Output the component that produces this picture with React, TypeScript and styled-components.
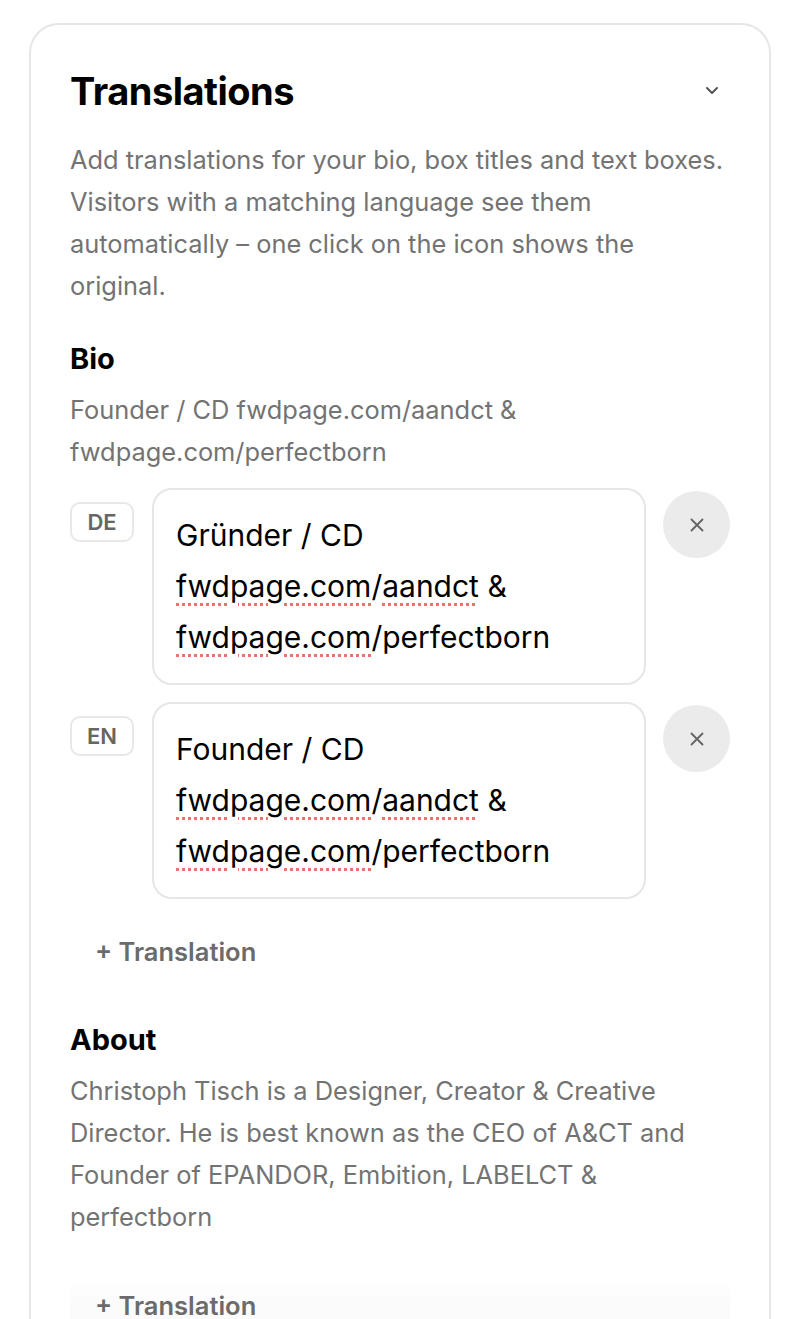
import React from "react";
import styled, { createGlobalStyle } from "styled-components";

const Global = createGlobalStyle`
  html, body { margin: 0; padding: 0; background: #ffffff; }
  body { font-family: Inter, "Noto Sans", "Liberation Sans", sans-serif; -webkit-font-smoothing: antialiased; }
  * { box-sizing: border-box; }
`;

const Page = styled.div`
  padding: 23px 29px 0;
  height: 1319px;
  overflow: hidden;
`;

const Card = styled.section`
  border: 2px solid #e6e6e6;
  border-radius: 30px;
  padding: 44px 39px 120px;
  background: #fff;
`;

const Header = styled.div`
  display: flex;
  align-items: center;
  justify-content: space-between;
`;

const Title = styled.h1`
  margin: 0;
  font-size: 38px;
  line-height: 44px;
  font-weight: 700;
  color: #000;
  letter-spacing: -0.5px;
`;

const Chevron = styled.svg`
  width: 18px;
  height: 18px;
  margin-right: 9px;
  margin-bottom: 2px;
  color: #555;
`;

const Muted = styled.p<{ $mt?: number }>`
  margin: ${(p) => p.$mt ?? 0}px 0 0;
  font-size: 25.4px;
  line-height: 42px;
  color: #737373;
  font-weight: 400;
  letter-spacing: 0;
`;

const SectionTitle = styled.h2<{ $mt: number }>`
  margin: ${(p) => p.$mt}px 0 0;
  font-size: 29px;
  line-height: 34px;
  font-weight: 700;
  color: #000;
  letter-spacing: 0;
`;

const Rows = styled.div`
  margin-top: 15px;
  display: flex;
  flex-direction: column;
  gap: 17px;
`;

const Row = styled.div`
  display: flex;
  align-items: flex-start;
  gap: 17px;
`;

const Badge = styled.span`
  flex: none;
  width: 64px;
  height: 40px;
  margin-top: 14px;
  margin-right: 1px;
  border: 2px solid #e8e8e8;
  border-radius: 10px;
  display: flex;
  align-items: center;
  justify-content: center;
  font-size: 22px;
  font-weight: 600;
  color: #666;
`;

const TextBox = styled.div`
  flex: 1;
  min-width: 0;
  border: 2px solid #e6e6e6;
  border-radius: 20px;
  padding: 20px 22px;
  font-size: 30px;
  line-height: 51px;
  color: #000;
  letter-spacing: 0;
`;

const Misspelled = styled.span`
  text-decoration: underline dotted #f07070;
  text-decoration-thickness: 3px;
  text-underline-offset: 6px;
`;

const CloseButton = styled.button`
  flex: none;
  width: 67px;
  height: 67px;
  margin-top: 3px;
  border: none;
  border-radius: 50%;
  background: #ebebeb;
  color: #666;
  display: flex;
  align-items: center;
  justify-content: center;
  padding: 0;
`;

const AddButton = styled.button<{ $mt: number; $shaded?: boolean }>`
  display: block;
  width: 100%;
  margin: ${(p) => p.$mt}px 0 0;
  padding: 15px 25px;
  border: none;
  border-radius: 14px;
  background: ${(p) =>
    p.$shaded
      ? "linear-gradient(180deg, rgba(251,251,251,0) 0%, #fbfbfb 45%, #fbfbfb 100%)"
      : "transparent"};
  text-align: left;
  font-family: inherit;
  font-size: 25.5px;
  line-height: 32px;
  font-weight: 600;
  color: #6b6b6b;
  letter-spacing: 0;
`;

const XIcon = () => (
  <svg width="16" height="16" viewBox="0 0 16 16" fill="none" stroke="currentColor" strokeWidth="1.9" strokeLinecap="round">
    <path d="M2.5 2.5 L13.5 13.5 M13.5 2.5 L2.5 13.5" />
  </svg>
);

type Entry = { lang: string; first: string };

const entries: Entry[] = [
  { lang: "DE", first: "Gründer / CD" },
  { lang: "EN", first: "Founder / CD" },
];

export default function App() {
  return (
    <>
      <Global />
      <Page>
        <Card>
          <Header>
            <Title>Translations</Title>
            <Chevron viewBox="0 0 18 18" fill="none" stroke="currentColor" strokeWidth="2" strokeLinecap="round" strokeLinejoin="round">
              <path d="M4 7 L9 12 L14 7" />
            </Chevron>
          </Header>
          <Muted $mt={26}>
            Add translations for your bio, box titles and text boxes. Visitors with a matching language see them
            automatically – one click on the icon shows the original.
          </Muted>

          <SectionTitle $mt={35}>Bio</SectionTitle>
          <Muted $mt={13}>Founder / CD fwdpage.com/aandct &amp; fwdpage.com/perfectborn</Muted>

          <Rows>
            {entries.map((e) => (
              <Row key={e.lang}>
                <Badge>{e.lang}</Badge>
                <TextBox>
                  {e.first}
                  <br />
                  <Misspelled>fwdpage.com</Misspelled>/<Misspelled>aandct</Misspelled> &amp;
                  <br />
                  <Misspelled>fwdpage.com</Misspelled>/perfectborn
                </TextBox>
                <CloseButton aria-label="Remove">
                  <XIcon />
                </CloseButton>
              </Row>
            ))}
          </Rows>
          <AddButton $mt={22}>+ Translation</AddButton>

          <SectionTitle $mt={40}>About</SectionTitle>
          <Muted $mt={13}>
            Christoph Tisch is a Designer, Creator &amp; Creative Director. He is best known as the CEO of A&amp;CT and
            Founder of EPANDOR, Embition, LABELCT &amp; perfectborn
          </Muted>
          <AddButton $mt={37} $shaded>
            + Translation
          </AddButton>
        </Card>
      </Page>
    </>
  );
}
